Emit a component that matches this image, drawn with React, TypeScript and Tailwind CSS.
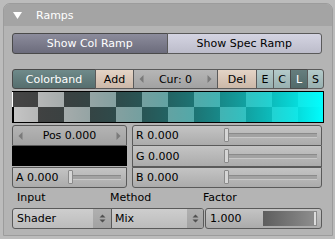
import React from "react";

function ArrowL() {
  return (
    <svg width="5" height="8" viewBox="0 0 5 8">
      <path d="M4.5 0 L0.5 4 L4.5 8Z" fill="#7a7a7a" />
    </svg>
  );
}
function ArrowR() {
  return (
    <svg width="5" height="8" viewBox="0 0 5 8">
      <path d="M0.5 0 L4.5 4 L0.5 8Z" fill="#7a7a7a" />
    </svg>
  );
}
function UpDown() {
  return (
    <svg width="7" height="9" viewBox="0 0 7 9">
      <path d="M3.5 0.5 L6.5 3.5 H0.5Z M0.5 5.5 H6.5 L3.5 8.5Z" fill="#505050" />
    </svg>
  );
}

function Track({ w }: { w: string }) {
  return (
    <div className={`relative h-[5px] ${w} border-t border-[#8a8a8a] border-b border-b-[#c8c8c8] bg-[#a2a2a2]`}>
      <div className="absolute -top-[6px] left-0 h-[14px] w-[5px] rounded-[1px] border border-[#8a8a8a] bg-[#d6d6d6]" />
    </div>
  );
}

export default function App() {
  return (
    <div className="h-[239px] w-[335px] bg-[#bcbcbc] pl-[3px] pt-[3px] font-['DejaVu_Sans',sans-serif] text-[11px] leading-none text-black">
      <div className="h-[233px] w-[330px] overflow-hidden rounded-t-[7px] border border-[#9c9c9c] bg-[#b4b4b4]">
        <div className="flex h-[22px] items-center bg-[#a4a4a4] pl-[9px] text-white">
          <svg width="9" height="7" viewBox="0 0 9 7">
            <path d="M0 0H9L4.5 7Z" fill="#fff" />
          </svg>
          <span className="ml-[14px] text-[11px]">Ramps</span>
        </div>

        <div className="flex flex-col pl-[8px]">
          {/* Row 1 */}
          <div className="mt-[7px] flex h-[21px] w-[310px]">
            <div className="flex flex-1 items-center justify-center rounded-l-[3px] border border-[#4a4a4a] bg-linear-to-b from-[#8c8c9c] to-[#6c6c7c] text-white">
              Show Col Ramp
            </div>
            <div className="-ml-px flex flex-1 items-center justify-center rounded-r-[3px] border border-[#5a5a5a] bg-linear-to-b from-[#d4d4e2] to-[#bcbcca]">
              Show Spec Ramp
            </div>
          </div>

          {/* Row 2 */}
          <div className="mt-[15px] flex h-[20px] w-[312px]">
            <div className="flex w-[84px] items-center justify-center rounded-l-[3px] border border-[#4a4a4a] bg-linear-to-b from-[#6f8a8a] to-[#566e6e] text-white">
              Colorband
            </div>
            <div className="-ml-px flex w-[39px] items-center justify-center border border-[#5a5a5a] bg-linear-to-b from-[#e4d4c6] to-[#ccb8a8]">
              Add
            </div>
            <div className="-ml-px flex w-[85px] items-center justify-between border border-[#5a5a5a] bg-linear-to-b from-[#b6b6b6] to-[#a2a2a2] px-[5px]">
              <ArrowL />
              <span>Cur: 0</span>
              <ArrowR />
            </div>
            <div className="-ml-px flex w-[40px] items-center justify-center border border-[#5a5a5a] bg-linear-to-b from-[#e4d4c6] to-[#ccb8a8]">
              Del
            </div>
            <div className="-ml-px flex w-[18px] items-center justify-center border border-[#5a5a5a] bg-linear-to-b from-[#b4caca] to-[#98b0b0]">
              E
            </div>
            <div className="-ml-px flex w-[18px] items-center justify-center border border-[#5a5a5a] bg-linear-to-b from-[#b4caca] to-[#98b0b0]">
              C
            </div>
            <div className="-ml-px flex w-[18px] items-center justify-center border border-[#4a4a4a] bg-linear-to-b from-[#667e7e] to-[#526a6a] text-white">
              L
            </div>
            <div className="-ml-px flex w-[17px] items-center justify-center rounded-r-[3px] border border-[#5a5a5a] bg-linear-to-b from-[#b4caca] to-[#98b0b0]">
              S
            </div>
          </div>

          {/* Color band */}
          <svg className="mt-[2px] block" width="312" height="32" viewBox="0 0 312 32">
            <defs>
              <pattern id="chk" width="52" height="32" patternUnits="userSpaceOnUse">
                <rect x="0" y="0" width="26" height="16" fill="#464646" />
                <rect x="26" y="0" width="26" height="16" fill="#c6c6c6" />
                <rect x="0" y="16" width="26" height="16" fill="#c6c6c6" />
                <rect x="26" y="16" width="26" height="16" fill="#464646" />
              </pattern>
              <linearGradient id="band" x1="0" y1="0" x2="1" y2="0">
                <stop offset="0" stopColor="#000000" stopOpacity="0" />
                <stop offset="1" stopColor="#00ffff" stopOpacity="1" />
              </linearGradient>
            </defs>
            <rect x="0" y="0" width="312" height="32" fill="url(#chk)" />
            <rect x="0" y="0" width="312" height="32" fill="url(#band)" />
            <rect x="0.5" y="0.5" width="311" height="31" fill="none" stroke="#000" />
            <rect x="0" y="1" width="1" height="15" fill="#fff" />
            <rect x="0" y="16" width="2" height="16" fill="#000" />
          </svg>

          {/* Pos / RGB */}
          <div className="mt-[2px] flex w-[310px] gap-[5px]">
            <div className="flex w-[115px] flex-col">
              <div className="flex h-[21px] items-center justify-between rounded-t-[3px] border border-[#5a5a5a] bg-linear-to-b from-[#b4b4b4] to-[#a2a2a2] px-[5px]">
                <ArrowL />
                <span>Pos 0.000</span>
                <ArrowR />
              </div>
              <div className="h-[20px] bg-black" />
              <div className="mt-[1px] flex h-[21px] items-center rounded-b-[3px] border border-[#5a5a5a] bg-linear-to-b from-[#c4c4c4] to-[#ababab] pl-[3px] pr-[5px]">
                <span>A 0.000</span>
                <div className="ml-auto">
                  <Track w="w-[53px]" />
                </div>
              </div>
            </div>
            <div className="flex flex-1 flex-col">
              <div className="flex h-[21px] items-center rounded-t-[3px] border border-[#5a5a5a] bg-linear-to-b from-[#c4c4c4] to-[#ababab] pl-[3px] pr-[4px]">
                <span>R 0.000</span>
                <div className="ml-auto">
                  <Track w="w-[93px]" />
                </div>
              </div>
              <div className="flex h-[21px] items-center border border-t-0 border-[#5a5a5a] bg-linear-to-b from-[#c4c4c4] to-[#ababab] pl-[3px] pr-[4px]">
                <span>G 0.000</span>
                <div className="ml-auto">
                  <Track w="w-[93px]" />
                </div>
              </div>
              <div className="flex h-[21px] items-center rounded-b-[3px] border border-[#5a5a5a] bg-linear-to-b from-[#c4c4c4] to-[#ababab] pl-[3px] pr-[4px]">
                <span>B 0.000</span>
                <div className="ml-auto">
                  <Track w="w-[93px]" />
                </div>
              </div>
            </div>
          </div>

          {/* Labels */}
          <div className="flex h-[20px] w-[310px] pt-[4px]">
            <span className="ml-[5px] w-[93px]">Input</span>
            <span className="w-[93px]">Method</span>
            <span>Factor</span>
          </div>

          {/* Dropdowns */}
          <div className="flex h-[21px] w-[310px]">
            <div className="flex w-[100px] items-stretch overflow-hidden rounded-l-[3px] border border-[#5a5a5a] bg-linear-to-b from-[#cecece] to-[#bcbcbc]">
              <span className="flex flex-1 items-center pl-[4px]">Shader</span>
              <span className="flex w-[18px] items-center justify-center bg-linear-to-b from-[#b0b0b0] to-[#a2a2a2]">
                <UpDown />
              </span>
            </div>
            <div className="-ml-px flex w-[93px] items-stretch overflow-hidden rounded-r-[3px] border border-[#5a5a5a] bg-linear-to-b from-[#cecece] to-[#bcbcbc]">
              <span className="flex flex-1 items-center pl-[3px]">Mix</span>
              <span className="flex w-[16px] items-center justify-center bg-linear-to-b from-[#b0b0b0] to-[#a2a2a2]">
                <UpDown />
              </span>
            </div>
            <div className="ml-[1px] flex flex-1 items-center rounded-[3px] border border-[#5a5a5a] bg-linear-to-b from-[#c4c4c4] to-[#ababab] pl-[4px] pr-[4px]">
              <span>1.000</span>
              <div className="relative ml-auto h-[15px] w-[54px] bg-linear-to-r from-[#5e5e5e] to-[#909090]">
                <div className="absolute right-0 top-[0px] h-[15px] w-[4px] border border-[#8a8a8a] bg-[#dcdcdc]" />
              </div>
            </div>
          </div>
        </div>
      </div>
    </div>
  );
}
